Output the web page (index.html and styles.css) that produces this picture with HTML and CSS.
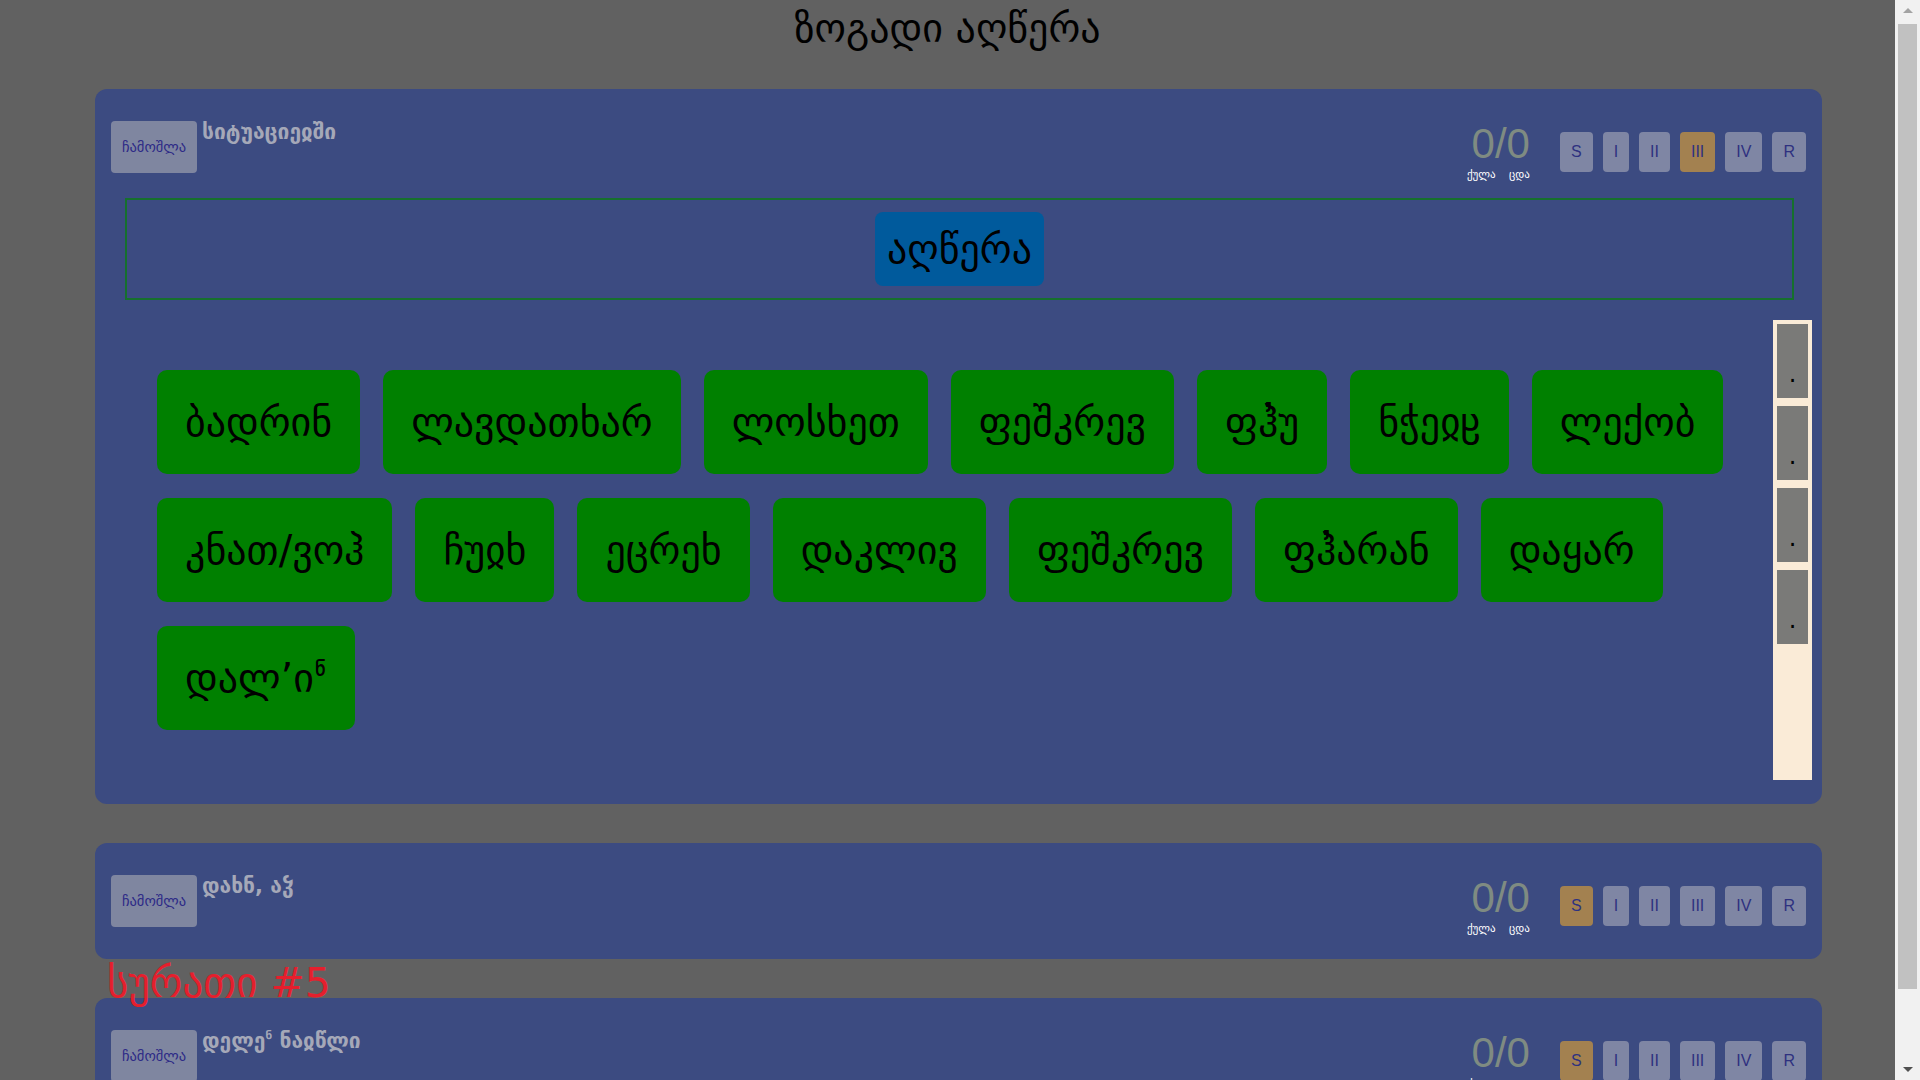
FILE: index.html
```
<!DOCTYPE html>
<html lang="ka">
<head>
<meta charset="utf-8">
<title>ზოგადი აღწერა</title>
<link rel="stylesheet" href="styles.css">
</head>
<body>
<h1 class="page-title">ზოგადი აღწერა</h1>
<main class="main">
  <section class="card">
    <div class="card-head">
      <button class="toggle">ჩამოშლა</button>
      <div class="card-title">სიტუაციეჲში</div>
      <div class="score">
        <div class="score-num">0/0</div>
        <div class="score-labels"><span>ქულა</span><span>ცდა</span></div>
      </div>
      <div class="levels">
        <button class="lvl">S</button>
        <button class="lvl">I</button>
        <button class="lvl">II</button>
        <button class="lvl on">III</button>
        <button class="lvl">IV</button>
        <button class="lvl">R</button>
      </div>
    </div>
    <div class="target"><span class="target-word">აღწერა</span></div>
    <div class="play">
      <div class="words">
        <span class="word">ბადრინ</span>
        <span class="word">ლავდათხარ</span>
        <span class="word">ლოსხეთ</span>
        <span class="word">ფეშკრევ</span>
        <span class="word">ფჰ̓უ</span>
        <span class="word">ნჭეჲჸ</span>
        <span class="word">ლექობ</span>
        <span class="word">კნათ/ვოჰ</span>
        <span class="word">ჩუჲხ</span>
        <span class="word">ეცრეხ</span>
        <span class="word">დაკლივ</span>
        <span class="word">ფეშკრევ</span>
        <span class="word">ფჰ̓არან</span>
        <span class="word">დაყარ</span>
        <span class="word">დალ’იჼ</span>
      </div>
      <div class="slots">
        <div class="slot">.</div>
        <div class="slot">.</div>
        <div class="slot">.</div>
        <div class="slot">.</div>
      </div>
    </div>
  </section>
  <div class="pic-label"></div>
  <section class="card">
    <div class="card-head">
      <button class="toggle">ჩამოშლა</button>
      <div class="card-title">დახნ, აჴ</div>
      <div class="score">
        <div class="score-num">0/0</div>
        <div class="score-labels"><span>ქულა</span><span>ცდა</span></div>
      </div>
      <div class="levels">
        <button class="lvl on">S</button>
        <button class="lvl">I</button>
        <button class="lvl">II</button>
        <button class="lvl">III</button>
        <button class="lvl">IV</button>
        <button class="lvl">R</button>
      </div>
    </div>
  </section>
  <div class="pic-label">სურათი #5</div>
  <section class="card">
    <div class="card-head">
      <button class="toggle">ჩამოშლა</button>
      <div class="card-title">დელეჼ ნაჲწლი</div>
      <div class="score">
        <div class="score-num">0/0</div>
        <div class="score-labels"><span>ქულა</span><span>ცდა</span></div>
      </div>
      <div class="levels">
        <button class="lvl on">S</button>
        <button class="lvl">I</button>
        <button class="lvl">II</button>
        <button class="lvl">III</button>
        <button class="lvl">IV</button>
        <button class="lvl">R</button>
      </div>
    </div>
  </section>
  <div class="pic-label"></div>
</main>
<div class="scrollbar" aria-hidden="true">
  <span class="sb-arrow sb-up"></span>
  <span class="sb-thumb"></span>
  <span class="sb-arrow sb-down"></span>
</div>
</body>
</html>
```
FILE: styles.css
```
html, body {
  margin: 0;
  padding: 0;
}
body {
  background: #616161;
  font-family: "DejaVu Sans", sans-serif;
  padding-bottom: 10px;
  margin-right: 25px;
}
.page-title {
  margin: 0 0 38px;
  padding-top: 5px;
  font-size: 40px;
  line-height: 46px;
  font-weight: normal;
  text-align: center;
  color: #000;
}
.main {
  margin: 0 73px 0 95px;
}
.card {
  background: #3c4b81;
  border-radius: 12px;
  padding: 32px 16px 24px;
}
.card-head {
  display: flex;
  align-items: flex-start;
}
.toggle {
  width: 86px;
  height: 52px;
  padding: 0;
  border: 0;
  border-radius: 4px;
  background: #7f86a0;
  color: #2d2a87;
  font-family: "DejaVu Sans", sans-serif;
  font-size: 14.5px;
}
.card-title {
  margin-left: 5px;
  font-size: 21px;
  line-height: 22px;
  font-weight: bold;
  color: #a5a8b8;
}
.score {
  margin-left: auto;
  margin-top: 2px;
  width: 63px;
}
.score-num {
  font-family: "Liberation Sans", sans-serif;
  font-size: 42px;
  line-height: 42px;
  color: #7f8b82;
  text-align: right;
}
.score-labels {
  display: flex;
  justify-content: space-between;
  margin-top: 3px;
  font-size: 11px;
  line-height: 13px;
  color: #fff;
}
.levels {
  display: flex;
  gap: 10px;
  margin-left: 30px;
  margin-top: 11px;
}
.lvl {
  height: 40px;
  padding: 0 11px;
  border: 0;
  border-radius: 4px;
  background: #7f86a4;
  color: #2e3180;
  font-family: "Liberation Sans", sans-serif;
  font-size: 16px;
}
.lvl.on {
  background: #a38150;
}
.target {
  display: flex;
  justify-content: center;
  margin: 17px 12px 0 14px;
  padding: 12px 0;
  border: 2px solid #16702d;
}
.target-word {
  background: #005a9c;
  color: #000;
  font-size: 40px;
  line-height: 46px;
  padding: 14px 12px;
  border-radius: 8px;
}
.play {
  display: flex;
  margin-top: 20px;
  margin-right: -6px;
}
.words {
  flex: 1;
  display: flex;
  flex-wrap: wrap;
  align-content: flex-start;
  gap: 24px 23px;
  padding: 50px 0 0 46px;
}
.word {
  background: #008000;
  color: #000;
  font-size: 40px;
  line-height: 46px;
  padding: 29px 28px;
  border-radius: 10px;
}
.slots {
  width: 31px;
  height: 452px;
  padding: 4px;
  background: #faebd7;
}
.slot {
  height: 74px;
  box-sizing: border-box;
  margin-bottom: 8px;
  padding-top: 36px;
  background: #7a7a78;
  color: #000;
  text-align: center;
  font-size: 24px;
  line-height: 28px;
}
.pic-label {
  height: 39px;
  padding-left: 12px;
  font-size: 41px;
  color: #e51f2d;
  white-space: nowrap;
}
.scrollbar {
  position: fixed;
  top: 0;
  right: 0;
  width: 25px;
  height: 100vh;
  background: #f1f1f1;
}
.sb-thumb {
  position: absolute;
  left: 3px;
  right: 3px;
  top: 24px;
  bottom: 91px;
  background: #c1c1c1;
}
.sb-arrow {
  position: absolute;
  left: 50%;
  width: 0;
  height: 0;
  margin-left: -5px;
  border-left: 5px solid transparent;
  border-right: 5px solid transparent;
}
.sb-up {
  top: 8px;
  border-bottom: 5px solid #a3a3a3;
}
.sb-down {
  bottom: 8px;
  border-top: 5px solid #505050;
}
```
